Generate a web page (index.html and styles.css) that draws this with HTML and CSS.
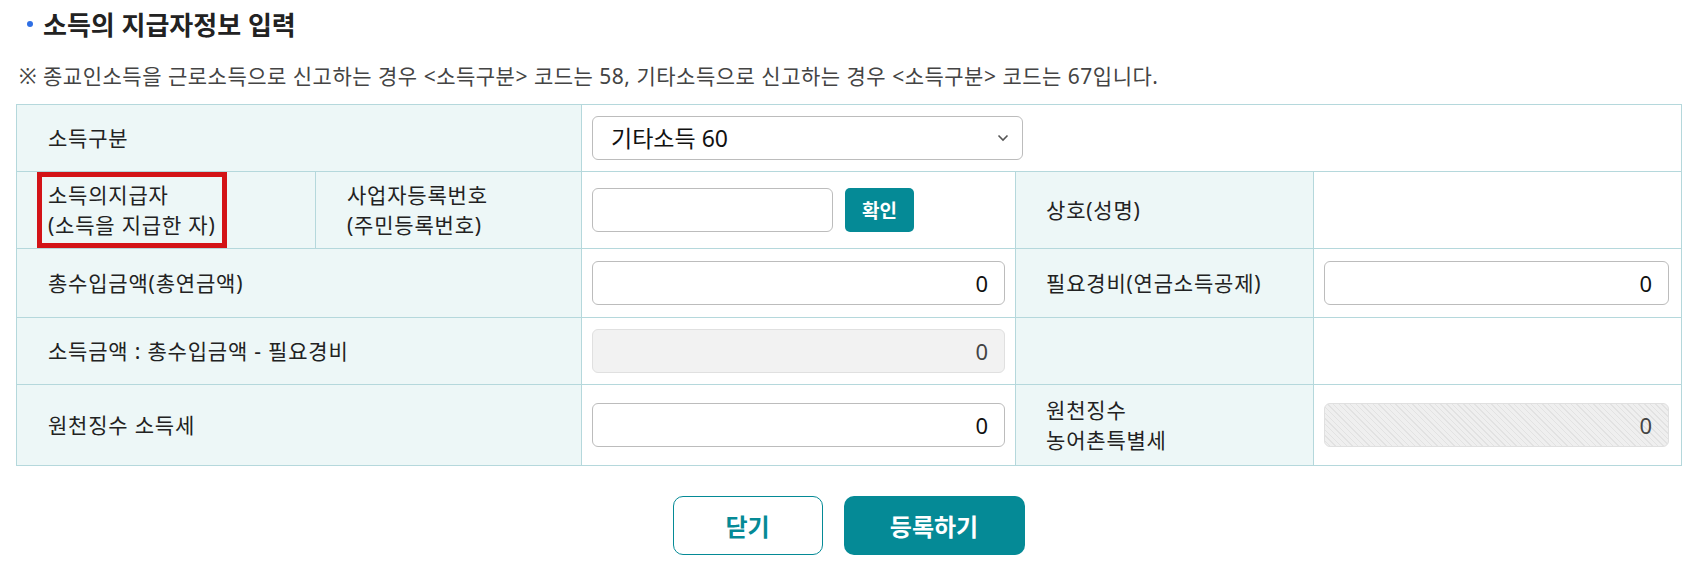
FILE: index.html
```html
<!DOCTYPE html>
<html lang="ko">
<head>
    <meta charset="UTF-8">
    <meta name="viewport" content="width=device-width, initial-scale=1.0">
    <title>소득의 지급자정보 입력</title>
    <link rel="stylesheet" href="styles.css">
</head>
<body>
    <div class="page">
        <h3 class="sec-title"><span class="dot"></span>소득의 지급자정보 입력</h3>
        <p class="note">※ 종교인소득을 근로소득으로 신고하는 경우 &lt;소득구분&gt; 코드는 58, 기타소득으로 신고하는 경우 &lt;소득구분&gt; 코드는 67입니다.</p>

        <table class="form-table">
            <colgroup>
                <col class="c1">
                <col class="c2">
                <col class="c3">
                <col class="c4">
                <col class="c5">
            </colgroup>
            <tr>
                <th colspan="2">소득구분</th>
                <td colspan="3">
                    <div class="select-wrap">
                        <select class="select">
                            <option>기타소득 60</option>
                        </select>
                        <svg class="chev" width="12" height="8" viewBox="0 0 12 8"><path d="M1.5 1.5 L6 6 L10.5 1.5" fill="none" stroke="#555" stroke-width="1.6"/></svg>
                    </div>
                </td>
            </tr>
            <tr class="tall">
                <th class="hl"><div class="mark">소득의지급자<br>(소득을 지급한 자)</div></th>
                <th>사업자등록번호<br>(주민등록번호)</th>
                <td>
                    <div class="bizno">
                        <input type="text" class="inp inp-biz">
                        <button type="button" class="btn-check">확인</button>
                    </div>
                </td>
                <th class="th-r">상호(성명)</th>
                <td></td>
            </tr>
            <tr class="mid">
                <th colspan="2">총수입금액(총연금액)</th>
                <td><input type="text" class="inp" value="0"></td>
                <th class="th-r">필요경비(연금소득공제)</th>
                <td class="td-r"><input type="text" class="inp" value="0"></td>
            </tr>
            <tr>
                <th colspan="2">소득금액 : 총수입금액 - 필요경비</th>
                <td><input type="text" class="inp inp-off" value="0" disabled></td>
                <th class="th-r"></th>
                <td></td>
            </tr>
            <tr class="tall last">
                <th colspan="2">원천징수 소득세</th>
                <td><input type="text" class="inp" value="0"></td>
                <th class="th-r">원천징수<br>농어촌특별세</th>
                <td class="td-r"><input type="text" class="inp inp-stripe" value="0" disabled></td>
            </tr>
        </table>

        <div class="btns">
            <button type="button" class="btn btn-line">닫기</button>
            <button type="button" class="btn btn-fill">등록하기</button>
        </div>
    </div>
</body>
</html>
```

FILE: styles.css
```css
/* 기본 */
body {
    margin: 0;
    font-family: "Noto Sans", "Noto Sans CJK KR", sans-serif;
    color: #222;
    background: #fff;
}

.page {
    padding: 0 12px 0 16px;
}

/* 제목 */
.sec-title {
    display: flex;
    align-items: center;
    gap: 10px;
    height: 48px;
    margin: 0;
    padding-left: 11px;
    font-size: 26px;
    font-weight: 700;
    color: #222;
}

.dot {
    width: 6px;
    height: 6px;
    border-radius: 50%;
    background: #2f6fe4;
}

.note {
    margin: 13px 0 13px 3px;
    line-height: 30px;
    font-size: 21px;
    letter-spacing: 0.5px;
    color: #444;
}

/* 입력 테이블 */
.form-table {
    width: 100%;
    border-collapse: collapse;
    table-layout: fixed;
    border: 1px solid #b5d8dc;
}

.c1 { width: 299px; }
.c2 { width: 266px; }
.c3 { width: 434px; }
.c4 { width: 298px; }
.c5 { width: 368px; }

.form-table th,
.form-table td {
    border: 1px solid #b5d8dc;
    height: 44px;
    padding: 11px 10px;
    vertical-align: middle;
}

.form-table th {
    background: #edf7f7;
    padding-left: 31px;
    text-align: left;
    font-weight: 400;
    font-size: 21px;
    letter-spacing: 0.8px;
    line-height: 30px;
    color: #222;
}

.form-table .th-r {
    padding-left: 30px;
}

.form-table .td-r {
    padding-right: 12px;
}

.form-table .mid th,
.form-table .mid td {
    padding-top: 12px;
    padding-bottom: 12px;
}

.form-table .tall th,
.form-table .tall td {
    padding-top: 7px;
    padding-bottom: 7px;
}

.form-table .last th,
.form-table .last td {
    padding-top: 10px;
    padding-bottom: 10px;
}

.form-table th.hl {
    padding: 0 0 0 20px;
}

.mark {
    width: fit-content;
    border: 5px solid #d31317;
    padding: 3px 6px 3px 6px;
}

/* 컨트롤 */
.select-wrap {
    position: relative;
    width: 431px;
}

.select {
    width: 100%;
    height: 44px;
    padding: 0 18px;
    border: 1px solid #bcbcbc;
    border-radius: 6px;
    background: #fff;
    font-family: inherit;
    font-size: 23px;
    color: #111;
    appearance: none;
    -webkit-appearance: none;
}

.chev {
    position: absolute;
    right: 14px;
    top: 18px;
}

.inp {
    display: block;
    width: 100%;
    height: 44px;
    box-sizing: border-box;
    padding: 0 16px;
    border: 1px solid #bcbcbc;
    border-radius: 6px;
    background: #fff;
    font-family: inherit;
    font-size: 22px;
    color: #111;
    text-align: right;
}

.inp-off {
    background: #f2f2f2;
    border-color: #e0e0e0;
    color: #444;
}

.inp-stripe {
    background: repeating-linear-gradient(45deg, #efefef 0 3px, #e2e2e2 3px 4px);
    border-color: #e0e0e0;
    color: #444;
}

.bizno {
    display: flex;
    align-items: center;
    gap: 12px;
}

.inp-biz {
    width: 241px;
}

.btn-check {
    width: 69px;
    height: 44px;
    border: none;
    border-radius: 5px;
    background: #058a96;
    color: #fff;
    font-family: inherit;
    font-size: 19px;
    font-weight: 700;
    cursor: pointer;
}

/* 하단 버튼 */
.btns {
    display: flex;
    justify-content: center;
    gap: 21px;
    margin-top: 30px;
}

.btn {
    height: 59px;
    border-radius: 10px;
    font-family: inherit;
    font-size: 24px;
    font-weight: 700;
    cursor: pointer;
}

.btn-line {
    width: 150px;
    border: 1px solid #058a96;
    background: #fff;
    color: #058a96;
}

.btn-fill {
    width: 181px;
    border: none;
    background: #058a96;
    color: #fff;
}
```
